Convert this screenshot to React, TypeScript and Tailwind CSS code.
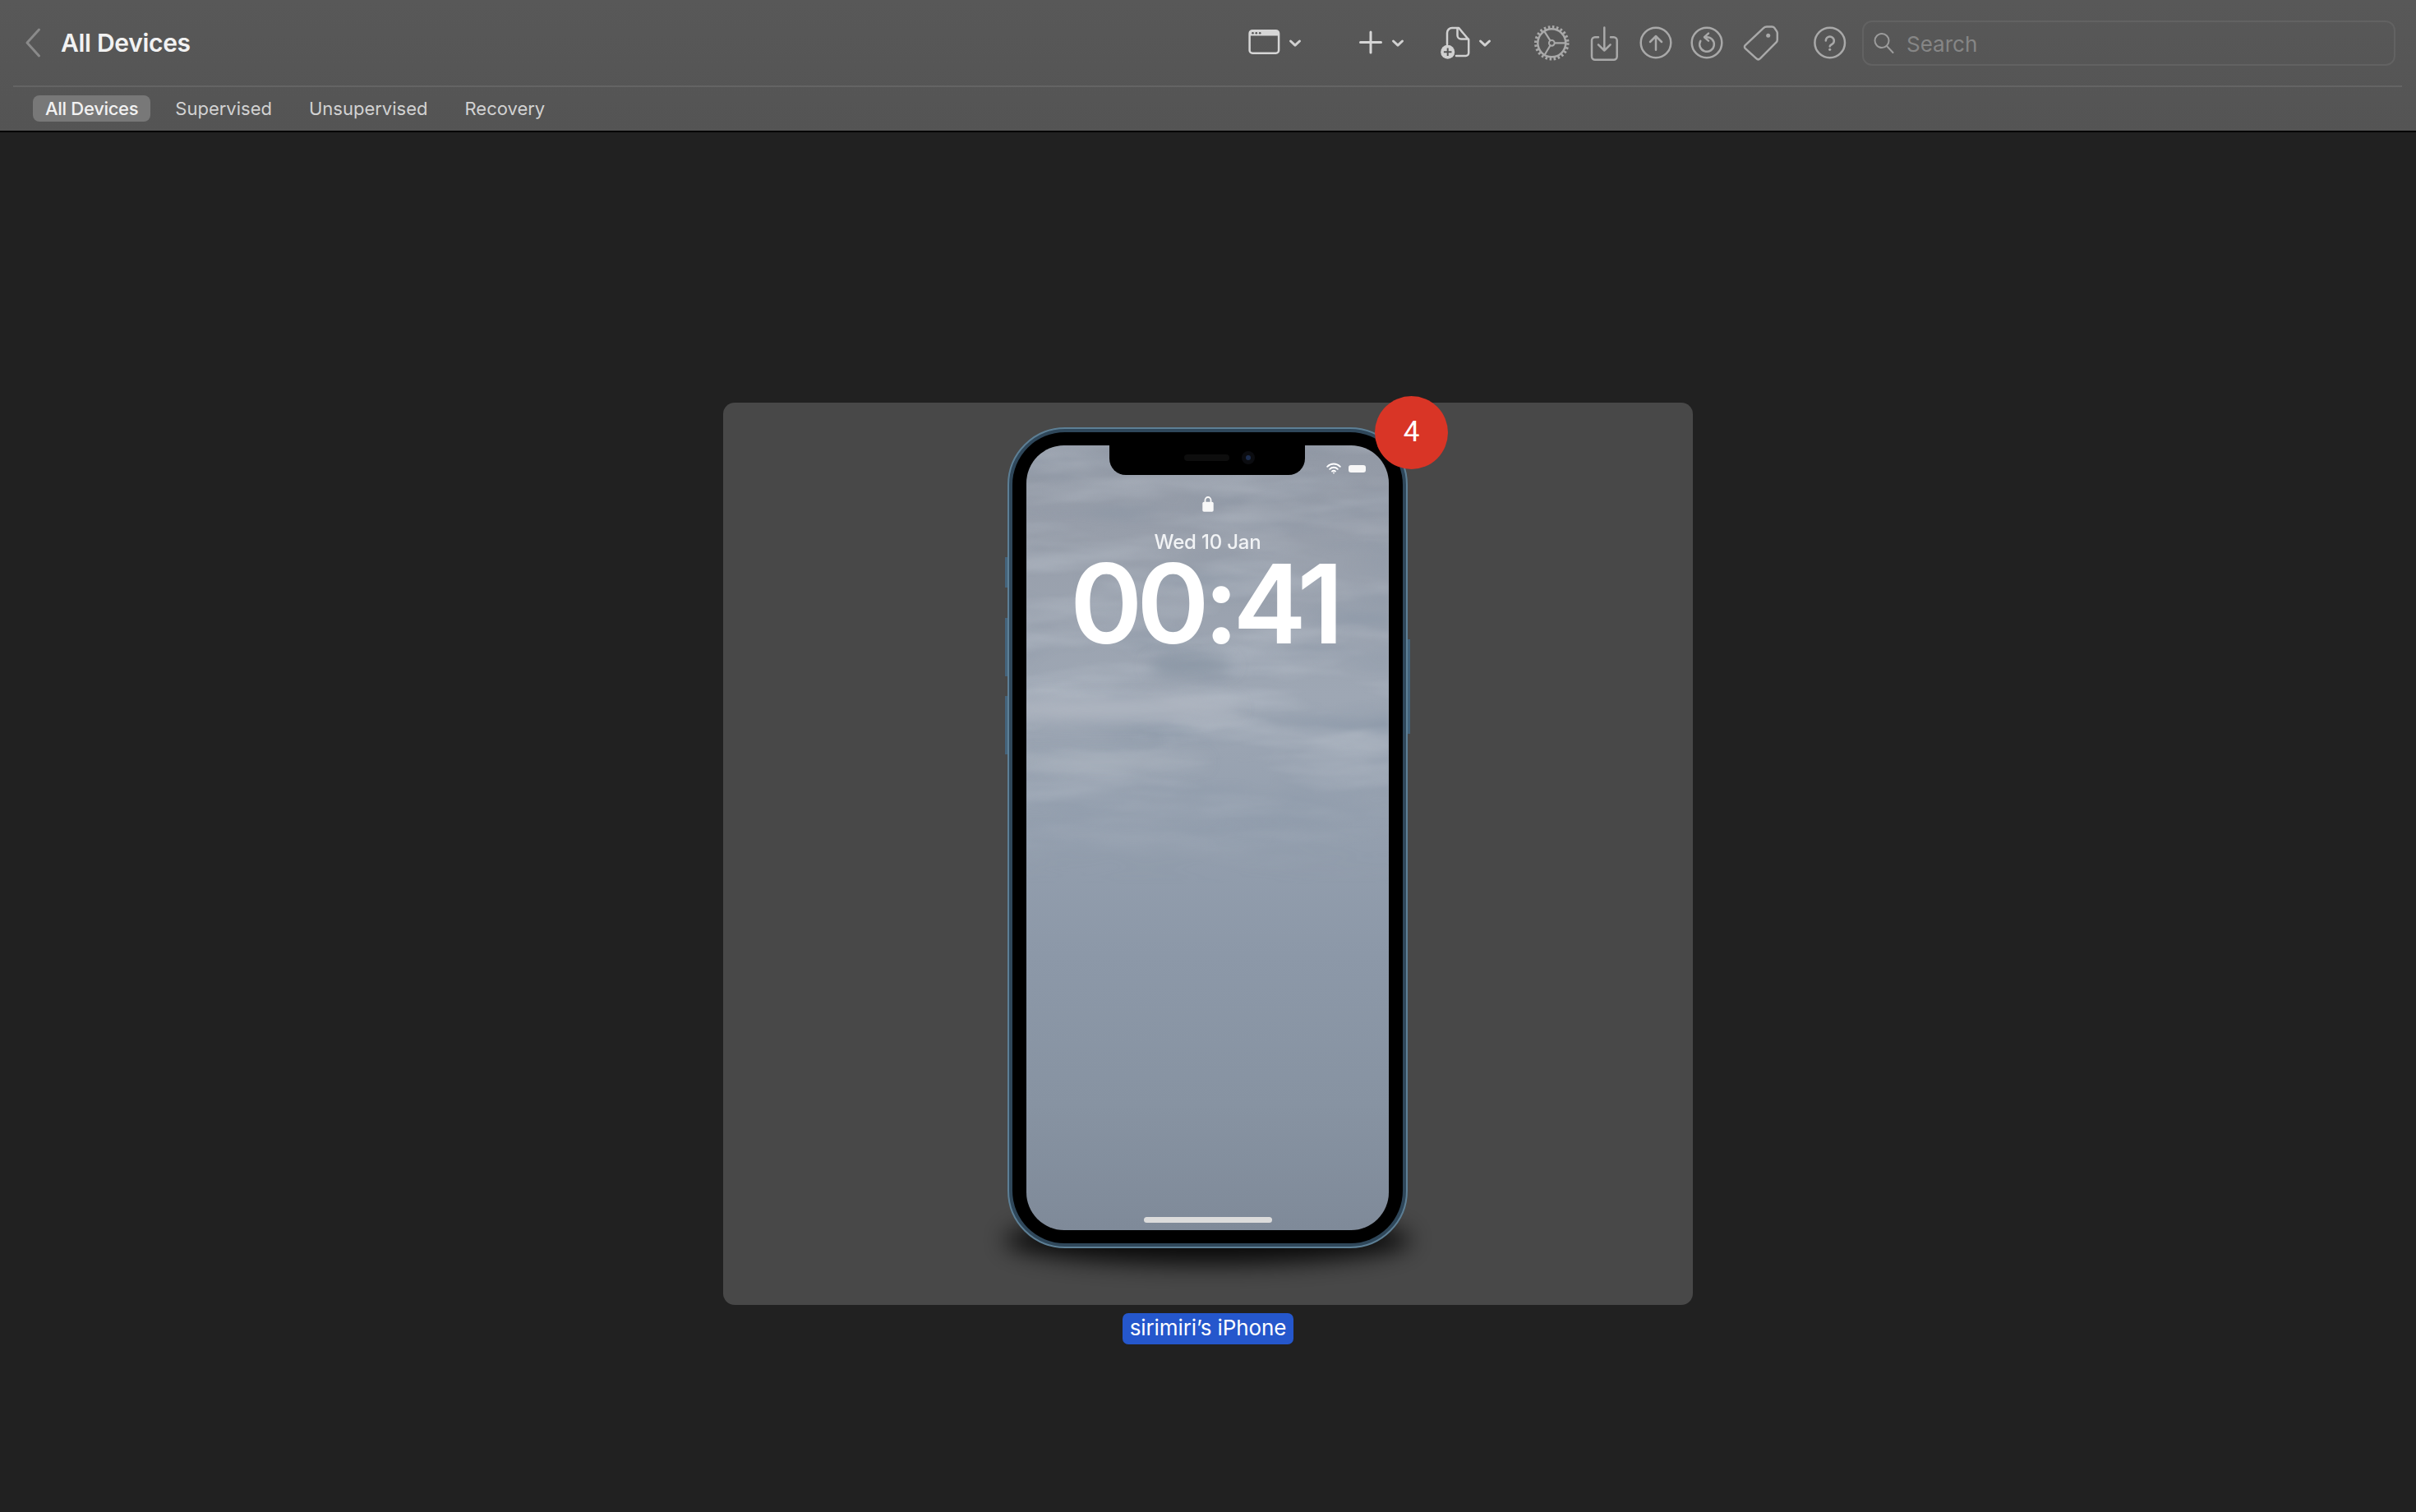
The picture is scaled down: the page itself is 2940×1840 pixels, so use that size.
const Chevron = () => (
  <svg width="16" height="48" viewBox="0 0 16 48" fill="none" stroke="#d0d0d0" strokeWidth="3" strokeLinecap="round" strokeLinejoin="round">
    <path d="M2.5 22 8 27.2 13.5 22" />
  </svg>
);

const WindowIcon = () => (
  <svg width="40" height="48" viewBox="0 0 40 48" fill="none">
    <rect x="2.6" y="9.2" width="35.5" height="27.5" rx="3.5" stroke="#d6d6d6" strokeWidth="2.5" />
    <path d="M2.6 15.5V11.5a2.5 2.5 0 0 1 2.5-2.5H35.6a2.5 2.5 0 0 1 2.5 2.5V15.5Z" fill="#d6d6d6" />
    <circle cx="6.5" cy="12.2" r="1.3" fill="#555" />
    <circle cx="10.8" cy="12.2" r="1.3" fill="#555" />
    <circle cx="15.2" cy="12.2" r="1.3" fill="#555" />
  </svg>
);

const PlusIcon = () => (
  <svg width="28" height="48" viewBox="0 0 28 48" fill="none" stroke="#d6d6d6" strokeWidth="3" strokeLinecap="round">
    <path d="M14 11v25M1.5 23.5h25" />
  </svg>
);

const DocIcon = () => (
  <svg width="37" height="48" viewBox="0 0 37 48" fill="none">
    <path
      d="M9 26V12a6 6 0 0 1 6-6h8.2l12 14.3V36.500a3.500 3.500 0 0 1-3.500 3.500H20M21.500 6.500V15a4.500 4.500 0 0 0 4.500 4.500H35"
      stroke="#d0d0d0"
      strokeWidth="2.500"
      strokeLinecap="round"
      strokeLinejoin="round"
    />
    <circle cx="9.700" cy="35.300" r="8.500" fill="#d0d0d0" />
    <path d="M9.700 30.500v9.600M4.900 35.300h9.600" stroke="#555" strokeWidth="2" />
  </svg>
);

const GearIcon = () => (
  <svg width="44" height="48" viewBox="0 0 44 48" fill="none" stroke="#a9a9a9">
    <circle cx="22.300" cy="24.300" r="17" strokeWidth="2.500" />
    <circle cx="22.300" cy="24.300" r="19.500" strokeWidth="3.500" strokeDasharray="2.550 2.555" />
    <circle cx="22.300" cy="24.300" r="3.400" strokeWidth="2" />
    <path d="M25.700 24.300H39M20.500 21.400 12.800 9.300M20.500 27.200 13.200 39.500" strokeWidth="2.200" />
  </svg>
);

const ImportIcon = () => (
  <svg width="38" height="48" viewBox="0 0 38 48" fill="none" stroke="#a9a9a9" strokeWidth="2.500" strokeLinecap="round" strokeLinejoin="round">
    <path d="M11 17.200H7a4 4 0 0 0-4 4V40.800a4 4 0 0 0 4 4H29.700a4 4 0 0 0 4-4V21.200a4 4 0 0 0-4-4H26" />
    <path d="M18.300 5.500V33.500M11 26.300l7.300 7.200 7.300-7.200" />
  </svg>
);

const UploadIcon = () => (
  <svg width="42" height="48" viewBox="0 0 42 48" fill="none" stroke="#a9a9a9" strokeWidth="2.500" strokeLinecap="round" strokeLinejoin="round">
    <circle cx="21" cy="24" r="18.300" />
    <path d="M21 32.700V16M14 23l7-7 7 7" />
  </svg>
);

const RestoreIcon = () => (
  <svg width="42" height="48" viewBox="0 0 42 48" fill="none" stroke="#a9a9a9" strokeWidth="2.500" strokeLinecap="round" strokeLinejoin="round">
    <circle cx="21" cy="24" r="18.300" />
    <path d="M20.500 17.200A8.800 8.800 0 1 1 13.300 21.800" />
    <path d="M23 12.600 18 17.200l5 4.400" />
  </svg>
);

const TagIcon = () => (
  <svg width="46" height="48" viewBox="0 0 46 48" fill="none" stroke="#a9a9a9" strokeWidth="2.500" strokeLinejoin="round">
    <path d="M26 6.200a6 6 0 0 1 4-1.700h6.200a4 4 0 0 1 3.200 1.600l2.600 3.800a4 4 0 0 1 .8 2.400v8.200a4 4 0 0 1-1.200 2.800L22 43.200a3.500 3.500 0 0 1-4.800 0L3.700 30.800a2.500 2.500 0 0 1 0-3.600Z" />
    <circle cx="31.700" cy="15.300" r="2.500" fill="#a9a9a9" stroke="none" />
  </svg>
);

const HelpIcon = () => (
  <svg width="42" height="48" viewBox="0 0 42 48" fill="none" stroke="#a9a9a9" strokeWidth="2.500" strokeLinecap="round">
    <circle cx="20.700" cy="24" r="18.300" />
    <path d="M15.800 21.500a5 5 0 1 1 8 4c-1.800 1.300-3.100 1.600-3.100 3" />
    <circle cx="20.700" cy="32.300" r="1.600" fill="#a9a9a9" stroke="none" />
  </svg>
);

const Wallpaper = () => (
  <svg className="absolute inset-0" width="441" height="955" viewBox="0 0 441 955">
    <defs>
      <linearGradient id="sky" x1="0" y1="0" x2="0" y2="1">
        <stop offset="0" stopColor="#9299a5" />
        <stop offset="0.12" stopColor="#989fab" />
        <stop offset="0.32" stopColor="#9ea7b4" />
        <stop offset="0.47" stopColor="#95a0af" />
        <stop offset="0.65" stopColor="#8c98a8" />
        <stop offset="0.84" stopColor="#8793a2" />
        <stop offset="1" stopColor="#7f8a99" />
      </linearGradient>
      <linearGradient id="fade" x1="0" y1="0" x2="0" y2="1">
        <stop offset="0" stopColor="#fff" stopOpacity="0.35" />
        <stop offset="0.38" stopColor="#fff" stopOpacity="0.5" />
        <stop offset="0.47" stopColor="#fff" stopOpacity="0.2" />
        <stop offset="0.56" stopColor="#fff" stopOpacity="0" />
      </linearGradient>
      <mask id="cloudFade">
        <rect width="441" height="955" fill="url(#fade)" />
      </mask>
      <filter id="lightClouds" x="0" y="0" width="100%" height="100%" colorInterpolationFilters="sRGB">
        <feTurbulence type="fractalNoise" baseFrequency="0.006 0.032" numOctaves="4" seed="11" />
        <feColorMatrix values="0 0 0 0 0.73  0 0 0 0 0.76  0 0 0 0 0.8  2.400 0 0 0 -1" />
        <feGaussianBlur stdDeviation="1.500" />
      </filter>
      <filter id="darkClouds" x="0" y="0" width="100%" height="100%" colorInterpolationFilters="sRGB">
        <feTurbulence type="fractalNoise" baseFrequency="0.005 0.022" numOctaves="3" seed="4" />
        <feColorMatrix values="0 0 0 0 0.5  0 0 0 0 0.56  0 0 0 0 0.63  2.200 0 0 0 -1" />
        <feGaussianBlur stdDeviation="3" />
      </filter>
      <filter id="soft">
        <feGaussianBlur stdDeviation="9" />
      </filter>
    </defs>
    <rect width="441" height="955" fill="url(#sky)" />
    <g mask="url(#cloudFade)">
      <rect width="441" height="955" filter="url(#darkClouds)" />
      <rect width="441" height="955" filter="url(#lightClouds)" />
    </g>
    <g filter="url(#soft)">
      <ellipse cx="200" cy="268" rx="52" ry="13" fill="#7f8b9b" opacity="0.7" />
      <ellipse cx="110" cy="320" rx="150" ry="14" fill="#b4bac4" opacity="0.8" />
      <ellipse cx="90" cy="385" rx="130" ry="10" fill="#adb5c0" opacity="0.6" />
    </g>
  </svg>
);

const Phone = () => (
  <div className="relative w-[487px] h-[999px]">
    {/* floor shadow */}
    <div className="absolute left-[-4px] right-[-4px] bottom-[-20px] h-[60px] rounded-[50%] bg-black opacity-85 blur-[14px]" />

    {/* side buttons */}
    <div className="absolute left-[-3px] top-[158px] w-[3px] h-[37px] bg-[#44647c]" />
    <div className="absolute left-[-3px] top-[232px] w-[3px] h-[71px] bg-[#44647c]" />
    <div className="absolute left-[-3px] top-[327px] w-[3px] h-[71px] bg-[#44647c]" />
    <div className="absolute right-[-3px] top-[258px] w-[3px] h-[115px] bg-[#44647c]" />

    <div className="relative w-full h-full rounded-[70px] bg-[#2f475a] border-2 border-[#5d7f95] p-[4px]">
      <div className="w-full h-full rounded-[64px] bg-black pl-[17px] pr-[16px] pt-[16px] pb-[16px]">
        <div className="relative w-[441px] h-[955px] rounded-[46px] overflow-hidden">
          <Wallpaper />

          {/* notch */}
          <div className="absolute left-[101px] top-0 w-[238px] h-[36px] rounded-b-[20px] bg-black flex items-start">
            <div className="ml-[91px] mt-[11px] w-[55px] h-[8px] rounded-full bg-[#0d0d0d]" />
            <div className="ml-[15px] mt-[7px] w-[16px] h-[16px] rounded-full bg-[#0b0c10] flex items-center justify-center">
              <div className="w-[6px] h-[6px] rounded-full bg-[#1c2c4e]" />
            </div>
          </div>

          {/* status icons */}
          <div className="absolute left-[365px] top-[21px] flex items-center gap-[9px]">
            <svg width="18" height="14" viewBox="0 0 18 14" fill="none" stroke="#fff" strokeWidth="1.900" strokeLinecap="round">
              <path d="M1.200 4.800a11 11 0 0 1 15.600 0" />
              <path d="M4.200 7.800a6.800 6.800 0 0 1 9.600 0" />
              <path d="M7 10.600a2.800 2.800 0 0 1 4 0" />
              <circle cx="9" cy="12.500" r="0.900" fill="#fff" stroke="none" />
            </svg>
            <div className="w-[21px] h-[9px] rounded-[3px] bg-[#f7f7f7]" />
          </div>

          {/* lock screen */}
          <div className="relative h-full flex flex-col items-center pt-[61px] text-white font-['Inter',sans-serif]">
            <svg width="14" height="20" viewBox="0 0 14 20" fill="none">
              <path d="M3.500 9V5.500a3.500 3.500 0 0 1 7 0V9" stroke="#f8f8f8" strokeWidth="1.800" />
              <rect x="0.300" y="7.800" width="13.400" height="12" rx="1.800" fill="#f8f8f8" />
            </svg>
            <div className="mt-[22px] text-[24px] leading-[30px] font-medium tracking-[-0.2px] text-[#f1f3f5]">Wed 10 Jan</div>
            <div className="mt-[4px] pr-[9px] text-[134px] leading-[110px] font-semibold tracking-[-7px]">00:41</div>
            <div className="mt-auto mb-[9px] w-[156px] h-[7px] rounded-full bg-[#dcdcdc]" />
          </div>
        </div>
      </div>
    </div>

    {/* count badge */}
    <div className="absolute left-[447px] top-[-38px] w-[89px] h-[89px] rounded-full bg-[#d93526] flex items-center justify-center text-white text-[35px] font-normal font-['Roboto',sans-serif]">
      4
    </div>
  </div>
);

const tabs = [
  { label: "All Devices", active: true },
  { label: "Supervised", active: false },
  { label: "Unsupervised", active: false },
  { label: "Recovery", active: false },
];

export default function App() {
  return (
    <div className="w-[2940px] h-[1840px] flex flex-col bg-[#212121] font-['Inter',sans-serif] overflow-hidden">
      <header className="shrink-0 h-[161px] flex flex-col bg-gradient-to-b from-[#585858] to-[#545454] border-b-2 border-black">
        <div className="h-[104px] shrink-0 flex items-center pl-[30px] pr-[25px]">
          <svg width="20" height="48" viewBox="0 0 20 48" fill="none" stroke="#8a8a8a" strokeWidth="3" strokeLinecap="round" strokeLinejoin="round">
            <path d="M17.500 8 3 24l14.500 16" />
          </svg>
          <h1 className="ml-[24px] text-[30px] font-semibold text-[#f2f2f2] tracking-[-0.3px]">All Devices</h1>

          <div className="ml-auto"><WindowIcon /></div>
          <div className="ml-[10px]"><Chevron /></div>
          <div className="ml-[70px]"><PlusIcon /></div>
          <div className="ml-[11px]"><Chevron /></div>
          <div className="ml-[43px]"><DocIcon /></div>
          <div className="ml-[10px]"><Chevron /></div>
          <div className="ml-[51px]"><GearIcon /></div>
          <div className="ml-[24px]"><ImportIcon /></div>
          <div className="ml-[22px]"><UploadIcon /></div>
          <div className="ml-[20px]"><RestoreIcon /></div>
          <div className="ml-[22px]"><TagIcon /></div>
          <div className="ml-[40px]"><HelpIcon /></div>

          <div className="ml-[18px] w-[649px] h-[55px] rounded-[12px] border-2 border-[#626262] flex items-center pl-[12px]">
            <svg width="26" height="26" viewBox="0 0 26 26" fill="none" stroke="#9c9c9c" strokeWidth="2" strokeLinecap="round">
              <circle cx="10" cy="10.500" r="8.500" />
              <path d="M16 17l7.500 8" />
            </svg>
            <span className="ml-[14px] pt-[3px] text-[26px] text-[#868686]">Search</span>
          </div>
        </div>

        <div className="h-[2px] shrink-0 ml-[16px] mr-[17px] bg-[#646464]" />

        <nav className="flex items-start gap-[15px] pl-[40px] pt-[10px]">
          {tabs.map((tab) => (
            <div
              key={tab.label}
              className={`h-[32px] px-[15px] rounded-[8px] flex items-center text-[22px] ${
                tab.active ? "bg-[#787878] text-[#f2f2f2] font-medium tracking-[-0.3px]" : "text-[#d2d2d2]"
              }`}
            >
              {tab.label}
            </div>
          ))}
        </nav>
      </header>

      <main className="flex-1 flex flex-col items-center pt-[329px]">
        <div className="w-[1180px] h-[1098px] rounded-[14px] bg-[#484848] flex justify-center pt-[30px] pr-[1px]">
          <Phone />
        </div>
        <div className="mt-[10px] h-[38px] px-[9px] pb-[3px] rounded-[7px] bg-[#2557cc] flex items-center text-[26px] tracking-[-0.1px] text-white">
          sirimiri’s iPhone
        </div>
      </main>
    </div>
  );
}
